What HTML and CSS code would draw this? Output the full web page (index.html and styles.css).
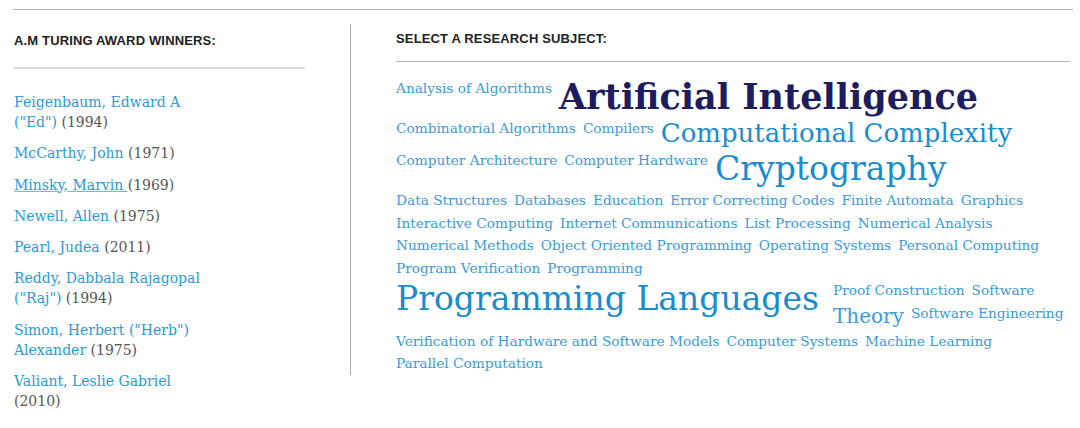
FILE: index.html
```html
<!DOCTYPE html>
<html lang="en">
<head>
<meta charset="utf-8">
<title>Turing Award Winners</title>
<link rel="stylesheet" href="styles.css">
</head>
<body>
<div class="page">
  <aside class="winners">
    <h2 class="heading">A.M TURING AWARD WINNERS:</h2>
    <hr class="rule-light">
    <ul class="names">
      <li><a href="#" class="name">Feigenbaum, Edward A ("Ed") </a><span class="year">(1994)</span></li>
      <li><a href="#" class="name">McCarthy, John </a><span class="year">(1971)</span></li>
      <li><a href="#" class="name hover">Minsky, Marvin </a><span class="year">(1969)</span></li>
      <li><a href="#" class="name">Newell, Allen </a><span class="year">(1975)</span></li>
      <li><a href="#" class="name">Pearl, Judea </a><span class="year">(2011)</span></li>
      <li><a href="#" class="name">Reddy, Dabbala Rajagopal ("Raj") </a><span class="year">(1994)</span></li>
      <li><a href="#" class="name">Simon, Herbert ("Herb") Alexander </a><span class="year">(1975)</span></li>
      <li><a href="#" class="name">Valiant, Leslie Gabriel </a><span class="year">(2010)</span></li>
    </ul>
  </aside>
  <section class="subjects">
    <h2 class="heading">SELECT A RESEARCH SUBJECT:</h2>
    <hr class="rule">
    <div class="cloud">
      <a href="#" class="tag">Analysis of Algorithms</a>
      <a href="#" class="tag ai">Artificial Intelligence</a>
      <a href="#" class="tag br">Combinatorial Algorithms</a>
      <a href="#" class="tag">Compilers</a>
      <a href="#" class="tag xl">Computational Complexity</a>
      <a href="#" class="tag br">Computer Architecture</a>
      <a href="#" class="tag">Computer Hardware</a>
      <a href="#" class="tag xxl">Cryptography</a>
      <a href="#" class="tag br">Data Structures</a>
      <a href="#" class="tag">Databases</a>
      <a href="#" class="tag">Education</a>
      <a href="#" class="tag">Error Correcting Codes</a>
      <a href="#" class="tag">Finite Automata</a>
      <a href="#" class="tag">Graphics</a>
      <a href="#" class="tag br">Interactive Computing</a>
      <a href="#" class="tag">Internet Communications</a>
      <a href="#" class="tag">List Processing</a>
      <a href="#" class="tag">Numerical Analysis</a>
      <a href="#" class="tag br">Numerical Methods</a>
      <a href="#" class="tag">Object Oriented Programming</a>
      <a href="#" class="tag">Operating Systems</a>
      <a href="#" class="tag">Personal Computing</a>
      <a href="#" class="tag br">Program Verification</a>
      <a href="#" class="tag">Programming</a>
      <a href="#" class="tag xxl br wide">Programming Languages</a>
      <a href="#" class="tag">Proof Construction</a>
      <a href="#" class="tag">Software</a>
      <a href="#" class="tag md">Theory</a>
      <a href="#" class="tag">Software Engineering</a>
      <a href="#" class="tag br">Verification of Hardware and Software Models</a>
      <a href="#" class="tag">Computer Systems</a>
      <a href="#" class="tag">Machine Learning</a>
      <a href="#" class="tag br">Parallel Computation</a>
    </div>
  </section>
</div>
</body>
</html>
```
FILE: styles.css
```css
html, body {
  margin: 0;
  padding: 0;
  background: #ffffff;
}

.page {
  margin: 9px 7px 0 13px;
  border-top: 1px solid #b5b5b5;
  display: flex;
  align-items: flex-start;
}

.heading {
  margin: 0;
  font-family: "Liberation Sans", Arial, sans-serif;
  font-weight: bold;
  font-size: 13px;
  line-height: 15px;
  letter-spacing: 0.15px;
  color: #222222;
}

/* left column */
.winners {
  width: 292px;
  flex: none;
  padding-top: 23px;
}

.winners .heading {
  padding-left: 1px;
}

.rule-light {
  margin: 19px 0 0 0;
  border: 0;
  height: 2px;
  background: #dddddd;
}

.names {
  list-style: none;
  margin: 0;
  padding: 23px 0 0 1px;
  width: 198px;
  font-family: "DejaVu Serif", Georgia, serif;
  font-size: 14px;
  line-height: 20px;
}

.names li {
  margin: 0 0 11.3px 0;
}

.name {
  color: #2a9ad6;
  text-decoration: none;
}

.name.hover {
  text-decoration: underline;
  text-decoration-color: #6cbce6;
}

.year {
  color: #555555;
}

/* right column */
.subjects {
  flex: 1;
  margin: 14px 0 0 45px;
  padding: 7px 0 0 45px;
  border-left: 1px solid #a9a9a9;
}

.rule {
  margin: 15px 3px 0 0;
  border: 0;
  height: 1px;
  background: #b5b5b5;
}

.cloud {
  display: flow-root;
  margin-top: 15px;
  font-family: "DejaVu Serif", Georgia, serif;
}

.tag {
  float: left;
  margin-right: 7px;
  font-size: 13.7px;
  line-height: 22.5px;
  color: #3a9ad9;
  text-decoration: none;
  white-space: nowrap;
}

.tag.br {
  clear: left;
}

.tag.ai {
  font-size: 35px;
  line-height: 40px;
  font-weight: bold;
  color: #1c1c5e;
}

.tag.xl {
  font-size: 26px;
  line-height: 32px;
  color: #1a8ccc;
}

.tag.xxl {
  font-size: 33px;
  line-height: 40px;
  color: #1a8ccc;
}

.tag.wide {
  margin-right: 14px;
}

.tag.md {
  font-size: 20px;
  line-height: 28px;
  color: #3a9ad9;
}
```
